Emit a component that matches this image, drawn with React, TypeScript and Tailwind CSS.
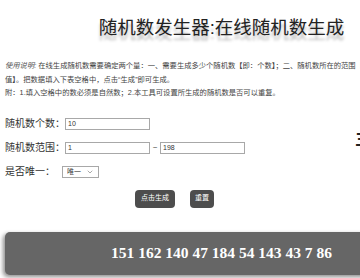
import { ChevronDown } from "lucide-react";

export default function App() {
  const numbers = [151, 162, 140, 47, 184, 54, 143, 43, 7, 86];

  return (
    <div className="w-[360px] h-[278px] overflow-hidden bg-white text-[#333] font-['Liberation_Sans','Noto_Sans_CJK_SC',sans-serif]">
      <div className="w-[443px]">
        {/* title */}
        <h1 className="pt-[16px] text-center text-[18.5px] leading-[24px] text-[#222] [text-shadow:0_5px_3px_rgba(0,0,0,0.28)]">
          随机数发生器:在线随机数生成
        </h1>

        {/* instructions */}
        <div className="mt-[19px] pl-[5px] text-[7.3px] leading-[13.5px] text-[#444] whitespace-nowrap">
          <p>
            <i className="text-[#555]">使用说明:</i> 在线生成随机数需要确定两个量：一、需要生成多少个随机数
            <b>【</b>即：个数<b>】</b>；二、随机数所在的范围<b>【</b>最小值，最大
          </p>
          <p>
            值<b>】</b>。把数据填入下表空格中，点击“生成”即可生成。
          </p>
          <p>附：1.填入空格中的数必须是自然数；2.本工具可设置所生成的随机数是否可以重复。</p>
        </div>

        {/* form */}
        <div className="flex pl-[5px] mt-[18px]">
          <div className="w-[350px] flex flex-col gap-[12px]">
            <div className="flex items-center h-[12px]">
              <span className="w-[60px] shrink-0 whitespace-nowrap text-[10px]">随机数个数：</span>
              <input
                defaultValue="10"
                className="w-[85px] h-[12px] border border-[#a8a8a8] pl-[2px] text-[7px] outline-none"
              />
            </div>
            <div className="flex items-center h-[12px]">
              <span className="w-[60px] shrink-0 whitespace-nowrap text-[10px]">随机数范围：</span>
              <input
                defaultValue="1"
                className="w-[85px] h-[12px] border border-[#a8a8a8] pl-[2px] text-[7px] outline-none"
              />
              <span className="w-[10px] text-center text-[8px]">~</span>
              <input
                defaultValue="198"
                className="w-[85px] h-[12px] border border-[#a8a8a8] pl-[2px] text-[7px] outline-none"
              />
            </div>
            <div className="flex items-center h-[12px]">
              <span className="w-[57px] shrink-0 whitespace-nowrap text-[10px]">是否唯一：</span>
              <div className="relative w-[37px] h-[12px] border border-[#a8a8a8] flex items-center">
                <select className="appearance-none w-full h-full pl-[4px] text-[7px] leading-none bg-transparent outline-none">
                  <option>唯一</option>
                  <option>可重复</option>
                </select>
                <ChevronDown size={8} strokeWidth={1.5} className="absolute right-[4px] top-[1.5px] text-[#555] pointer-events-none" />
              </div>
            </div>
          </div>
          <div className="pt-[12px] text-[16px] font-bold leading-[20px] text-[#222]">三</div>
        </div>

        {/* buttons */}
        <div className="flex gap-[15px] ml-[135px] mt-[12px]">
          <button className="w-[40px] h-[18px] rounded-[4px] bg-[#4d4d4d] text-white text-[7px]">点击生成</button>
          <button className="w-[24px] h-[18px] rounded-[4px] bg-[#4d4d4d] text-white text-[7px]">重置</button>
        </div>

        {/* result */}
        <div className="mx-[5px] mt-[24px] h-[43px] rounded-[5px] bg-[#666] shadow-[-2px_2px_4px_rgba(0,0,0,0.45)] flex items-center justify-center">
          <span className="font-['Liberation_Serif',serif] font-bold text-[15.5px] text-white">
            {numbers.join(" ")}
          </span>
        </div>
      </div>
    </div>
  );
}
